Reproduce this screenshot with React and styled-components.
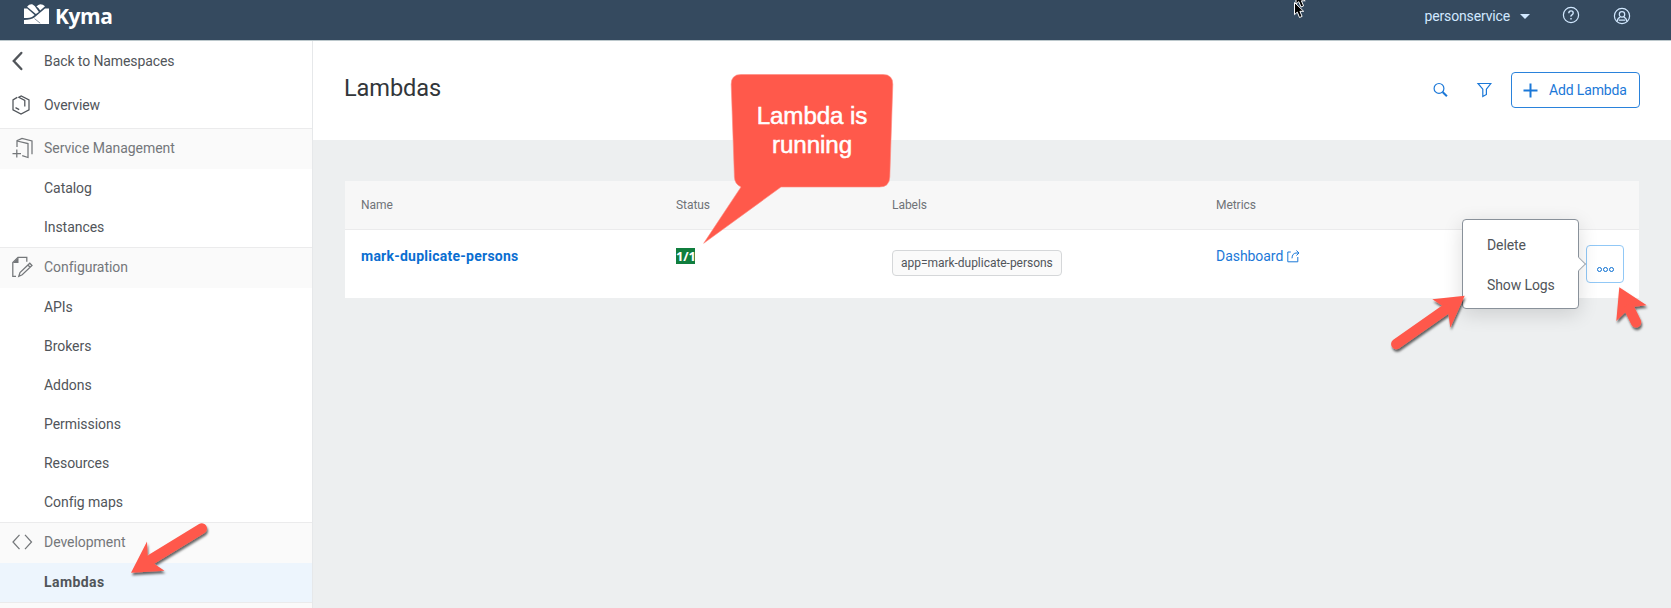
import React from "react";
import styled, { createGlobalStyle, css } from "styled-components";

const GlobalStyle = createGlobalStyle`
  *, *::before, *::after { box-sizing: border-box; }
  body {
    margin: 0;
    overflow: hidden;
    background: #edeff0;
    color: #51555a;
    font: 400 14px/20px Roboto, "Liberation Sans", sans-serif;
  }
`;

const Page = styled.div`
  position: relative;
  width: 100%;
  height: 608px;
  overflow: hidden;
  display: flex;
  flex-direction: column;
`;

const ShellBar = styled.header`
  flex: none;
  height: 41px;
  background: #354a5f;
  border-bottom: 1px solid #bcc8cc;
  display: flex;
  align-items: flex-start;
  padding: 3px 40px 0 24px;
`;

const LogoMark = styled.svg`
  width: 25px;
  height: 22px;
  display: block;
`;

const Brand = styled.span`
  margin-left: 6px;
  color: #fff;
  font: 700 21px/26px "Open Sans", "Noto Sans", sans-serif;
  letter-spacing: -0.4px;
`;

const ShellActions = styled.div`
  margin-left: auto;
  height: 26px;
  display: flex;
  align-items: center;
  color: #d1e8ff;
`;

const ContextSwitch = styled.button`
  display: flex;
  align-items: center;
  gap: 10px;
  padding: 0;
  border: 0;
  background: none;
  color: #d1e8ff;
  font: inherit;
  line-height: 26px;
  letter-spacing: -0.15px;
`;

const Caret = styled.span`
  border: 5px solid transparent;
  border-top: 5px solid #d1e8ff;
  border-bottom: 0;
`;

const ShellIcon = styled.svg`
  width: 18px;
  height: 18px;
  margin-left: ${(p) => p.$gap}px;
  margin-top: ${(p) => p.$drop || 0}px;
  fill: none;
  stroke: #d1e8ff;
  stroke-width: 1.2;
`;

const Body = styled.div`
  flex: 1;
  display: flex;
  min-height: 0;
`;

const Sidebar = styled.nav`
  flex: none;
  width: 313px;
  overflow: hidden;
  background: #fff;
  border-right: 1px solid #e6e8ea;
`;

const NavTop = styled.div`
  height: 87px;
`;

const navRow = css`
  display: flex;
  align-items: center;
  padding-left: 12px;
`;

const NavLink = styled.div`
  ${navRow}
  height: ${(p) => p.$height}px;
  letter-spacing: -0.09px;
`;

const GroupHeader = styled.div`
  ${navRow}
  height: 41px;
  padding-bottom: 2px;
  border-top: 1px solid #ebebec;
  background: #fafafa;
  color: #74777a;
  letter-spacing: -0.04px;
`;

const NavIcon = styled.span`
  flex: none;
  width: 32px;
  height: 22px;
  display: flex;
  align-items: center;

  svg {
    display: block;
    fill: none;
    stroke: currentColor;
    stroke-width: 1.25;
  }
`;

const NavItem = styled.div`
  height: 39px;
  padding-left: 44px;
  line-height: 39px;
  letter-spacing: -0.05px;
  ${(p) =>
    p.$active &&
    css`
      background: #edf5fd;
      font-weight: 700;
      letter-spacing: 0.42px;
    `}
`;

const Main = styled.main`
  flex: 1;
  min-width: 0;
`;

const PageHeader = styled.div`
  height: 99px;
  background: #fff;
  display: flex;
  align-items: flex-start;
  padding: 31px 31px 0 31px;
`;

const Title = styled.h1`
  margin: 0;
  color: #32363a;
  font-size: 23.6px;
  font-weight: 400;
  line-height: 32px;
  letter-spacing: -0.1px;
`;

const Toolbar = styled.div`
  margin-left: auto;
  height: 36px;
  display: flex;
  align-items: center;
`;

const ToolIcon = styled.svg`
  width: 16px;
  height: 16px;
  margin-right: ${(p) => p.$gap}px;
  fill: none;
  stroke: #1b78d8;
  stroke-width: 1.2;
`;

const AddButton = styled.button`
  width: 129px;
  height: 36px;
  display: flex;
  align-items: center;
  gap: 11px;
  padding: 0 0 0 11px;
  border: 1px solid #2a82db;
  border-radius: 4px;
  background: #fff;
  color: #1b78d8;
  font: inherit;
  letter-spacing: -0.14px;
`;

const Table = styled.section`
  margin: 41px 32px 0 32px;
  height: 117px;
`;

const columns = css`
  display: grid;
  grid-template-columns: 315px 216px 324px 1fr;
  padding-left: 16px;
`;

const TableHead = styled.div`
  ${columns}
  height: 49px;
  background: #f7f7f7;
  border-bottom: 1px solid #ebebec;
  color: #6f7377;
  font-size: 12px;
  line-height: 48px;
  letter-spacing: -0.05px;
`;

const TableRow = styled.div`
  ${columns}
  height: 68px;
  background: #fff;
  padding-top: 16px;
`;

const LambdaLink = styled.a`
  color: #0a6ed1;
  font-weight: 700;
  letter-spacing: 0.25px;
`;

const Status = styled.span`
  display: inline-block;
  width: 19px;
  height: 16px;
  margin-top: 2px;
  background: #107e3e;
  color: #fff;
  font: 700 13px/16px "Noto Sans", sans-serif;
  letter-spacing: -0.2px;
  white-space: nowrap;
  overflow: hidden;
`;

const Label = styled.span`
  display: inline-block;
  height: 26px;
  margin-top: 4px;
  padding: 0 8px;
  border: 1px solid #d5d7d9;
  border-radius: 4px;
  background: #fafafa;
  font-size: 12px;
  line-height: 24px;
  letter-spacing: -0.03px;
`;

const MetricsLink = styled.a`
  display: flex;
  align-items: center;
  height: 20px;
  gap: 4px;
  color: #1b78d8;
  letter-spacing: -0.05px;
`;

const MenuButton = styled.button`
  position: absolute;
  left: 1586px;
  top: 245px;
  width: 38px;
  height: 38px;
  padding: 10px 0 0;
  display: flex;
  align-items: center;
  justify-content: center;
  gap: 1px;
  border: 1px solid #91c8f6;
  border-radius: 4px;
  background: #fff;
`;

const Dot = styled.span`
  width: 5px;
  height: 5px;
  border: 1.3px solid #0a6ed1;
  border-radius: 50%;
`;

const Popover = styled.div`
  position: absolute;
  left: 1462px;
  top: 219px;
  width: 117px;
  height: 90px;
  padding: 5px 0 0 24px;
  border: 1px solid #89919a;
  border-radius: 4px;
  background: #fff;
  box-shadow: 0 5px 20px rgba(0, 0, 0, 0.14);

  &::after {
    content: "";
    position: absolute;
    right: -6px;
    top: 39px;
    width: 10px;
    height: 10px;
    border: 1px solid #a5abb2;
    border-left: 0;
    border-bottom: 0;
    background: #fff;
    transform: rotate(45deg);
  }
`;

const PopoverItem = styled.div`
  height: 40px;
  line-height: 40px;
  letter-spacing: -0.1px;
`;

const Overlay = styled.svg`
  position: absolute;
  inset: 0;
  width: 1671px;
  height: 608px;
  pointer-events: none;
`;

const CalloutText = styled.div`
  position: absolute;
  left: 732px;
  top: 101px;
  width: 160px;
  text-align: center;
  color: #fff;
  font: 400 24.2px/29px "Liberation Sans", Arial, sans-serif;
  letter-spacing: -0.1px;
  -webkit-text-stroke: 0.5px #fff;
`;

const configurationItems = ["APIs", "Brokers", "Addons", "Permissions", "Resources", "Config maps"];

function KymaLogo() {
  return (
    <LogoMark viewBox="0 0 25 22">
      <path d="M0 5.5H3.2L10.6 12 8.7 13.4Q6.5 14.9 0 14.9Z" fill="#fff" />
      <path d="M3.2 3.5Q5.3.8 8.2 1.2Q10.8 2.2 13 6.2L14.9 8.9 11.9 11.1 3.4 4Z" fill="#fff" />
      <path d="M12.4 3.4Q14.3 1.6 16.3 1.2Q19 1.2 21 3.3L16.2 7.5 14.4 5.1Z" fill="#fff" />
      <path d="M25 5.5V21H0V16.9Q7.2 16.8 10.4 14.4L21 5.5Z" fill="#fff" />
      <path d="M10.5 15.6L16.2 20.2" stroke="#354a5f" strokeWidth="0.6" />
    </LogoMark>
  );
}

function Arrow({ head, shaft }) {
  return (
    <g filter="url(#arrow-shadow)">
      <polygon points={head} fill="#ff594b" />
      <path d={shaft} stroke="#ff594b" strokeWidth="10.5" strokeLinecap="round" />
    </g>
  );
}

function Pointer({ x, y }) {
  return (
    <path
      transform={`translate(${x} ${y})`}
      d="M0 0V12.2L2.8 9.6 5 15 7.6 13.9 5.4 8.8H9.2Z"
      fill="#000"
      stroke="#fff"
      strokeWidth="1"
    />
  );
}

export default function App() {
  return (
    <Page>
      <GlobalStyle />
      <ShellBar>
        <KymaLogo />
        <Brand>Kyma</Brand>
        <ShellActions>
          <ContextSwitch>
            personservice
            <Caret />
          </ContextSwitch>
          <ShellIcon $gap={32} $drop={-2} viewBox="0 0 18 18">
            <circle cx="9" cy="9" r="7.6" />
            <path d="M6.8 7.2Q6.8 4.9 9 4.9T11.2 7Q11.2 8.1 10 8.8T9 10.6M9 12V13.4" strokeWidth="1.4" />
          </ShellIcon>
          <ShellIcon $gap={33} viewBox="0 0 18 18">
            <circle cx="9" cy="9" r="7.6" />
            <circle cx="9" cy="7.4" r="2.7" />
            <path d="M4.2 14.5Q4.5 11 7.2 10.2M13.8 14.5Q13.5 11 10.8 10.2M5.8 13.1H12.2" />
          </ShellIcon>
        </ShellActions>
      </ShellBar>

      <Body>
        <Sidebar>
          <NavTop>
            <NavLink $height={39}>
              <NavIcon>
                <svg width="12" height="20" viewBox="0 0 12 20">
                  <path d="M9.3 2L1.8 10 9.3 18" strokeWidth="2.4" strokeLinecap="round" />
                </svg>
              </NavIcon>
              Back to Namespaces
            </NavLink>
            <NavLink $height={49}>
              <NavIcon>
                <svg width="18" height="20" viewBox="0 0 18 20">
                  <path d="M5.2 2.4L1 4.9V14.8L9 19 17 14.8V4.9L9.2 1 6.8 2.2 12.8 5.4V11.5M3.5 12.6L7.2 14.6" />
                </svg>
              </NavIcon>
              Overview
            </NavLink>
          </NavTop>

          <GroupHeader>
            <NavIcon>
              <svg width="21" height="22" viewBox="0 0 21 22">
                <path d="M5 10V3.7L10 1.4 20 4V17.2M5 4L16 6.6V20.5L10.2 18.6M0.5 16.5H9M4.8 12.5V20.5" />
              </svg>
            </NavIcon>
            Service Management
          </GroupHeader>
          <NavItem>Catalog</NavItem>
          <NavItem>Instances</NavItem>

          <GroupHeader>
            <NavIcon>
              <svg width="21" height="22" viewBox="0 0 21 22">
                <path d="M4 20.3H.8V6.5L6 1.3H14.8V5.8M6.8 20.3L8 16.6 17.8 7.2 20 9.5 10.2 18.8ZM16 9.2L18 11" />
                <path d="M.8 7L6.5 1.3V7Z" fill="currentColor" stroke="none" />
              </svg>
            </NavIcon>
            Configuration
          </GroupHeader>
          {configurationItems.map((item) => (
            <NavItem key={item}>{item}</NavItem>
          ))}

          <GroupHeader>
            <NavIcon>
              <svg width="21" height="16" viewBox="0 0 21 16">
                <path d="M7.5 .8L1 8 7.5 15.2M13 .8L19.5 8 13 15.2" />
              </svg>
            </NavIcon>
            Development
          </GroupHeader>
          <NavItem $active>Lambdas</NavItem>
          <GroupHeader />
        </Sidebar>

        <Main>
          <PageHeader>
            <Title>Lambdas</Title>
            <Toolbar>
              <ToolIcon $gap={28} viewBox="0 0 16 16">
                <circle cx="7" cy="6.4" r="4.9" />
                <path d="M10.6 10L14.9 14.3" strokeWidth="2" />
              </ToolIcon>
              <ToolIcon $gap={19} viewBox="0 0 16 16">
                <path d="M2 1.5H14.8L10.4 7.2V12.4L6.8 14.4V7.2Z" />
              </ToolIcon>
              <AddButton>
                <svg width="15" height="15" viewBox="0 0 15 15" fill="none" stroke="currentColor" strokeWidth="2">
                  <path d="M7.5 .5V14.5M.5 7.5H14.5" />
                </svg>
                Add Lambda
              </AddButton>
            </Toolbar>
          </PageHeader>

          <Table>
            <TableHead>
              <span>Name</span>
              <span>Status</span>
              <span>Labels</span>
              <span>Metrics</span>
            </TableHead>
            <TableRow>
              <div>
                <LambdaLink>mark-duplicate-persons</LambdaLink>
              </div>
              <div>
                <Status>1/1</Status>
              </div>
              <div>
                <Label>app=mark-duplicate-persons</Label>
              </div>
              <MetricsLink>
                Dashboard
                <svg width="13" height="13" viewBox="0 0 13 13" fill="none" stroke="currentColor" strokeWidth="1">
                  <path d="M3.8 2H.8V11.8H10.8V7M5 8.3Q5.2 3.4 9 3H12M9.4 .5L12 3 9.4 5.5" />
                </svg>
              </MetricsLink>
            </TableRow>
          </Table>
        </Main>
      </Body>

      <MenuButton aria-label="Actions">
        <Dot />
        <Dot />
        <Dot />
      </MenuButton>
      <Popover>
        <PopoverItem>Delete</PopoverItem>
        <PopoverItem>Show Logs</PopoverItem>
      </Popover>

      <Overlay viewBox="0 0 1671 608">
        <defs>
          <filter id="arrow-shadow" x="-20%" y="-20%" width="150%" height="150%">
            <feDropShadow dx="1" dy="2.5" stdDeviation="1.2" floodColor="#000" floodOpacity="0.6" />
          </filter>
        </defs>
        <path
          d="M741 74.5H883Q893 74.5 892.8 84.5L889.8 177Q889.5 187 879.5 187H781L703.7 243.3 741 187Q734.6 184 734.4 177L731.2 84.5Q731 74.5 741 74.5Z"
          fill="#ff594b"
          stroke="#ff8a80"
          strokeWidth="0.6"
        />
        <Arrow head="131,572.7 147,541.5 147.7,556 153.5,563.3 164.5,570.8" shaft="M151.5 559.3L201.8 528.5" />
        <Arrow head="1464.7,295.7 1432.3,299.3 1442.7,306 1448.3,313.3 1450.3,327.7" shaft="M1445.5 309.5L1396.3 344" />
        <Arrow head="1619.3,287.3 1646.7,305.3 1634.3,306.7 1624.3,313.3 1616.3,321" shaft="M1629.5 309L1636 322.2" />
        <Pointer x={1296} y={-8} />
        <Pointer x={1294.5} y={2.5} />
      </Overlay>
      <CalloutText>
        Lambda is
        <br />
        running
      </CalloutText>
    </Page>
  );
}
